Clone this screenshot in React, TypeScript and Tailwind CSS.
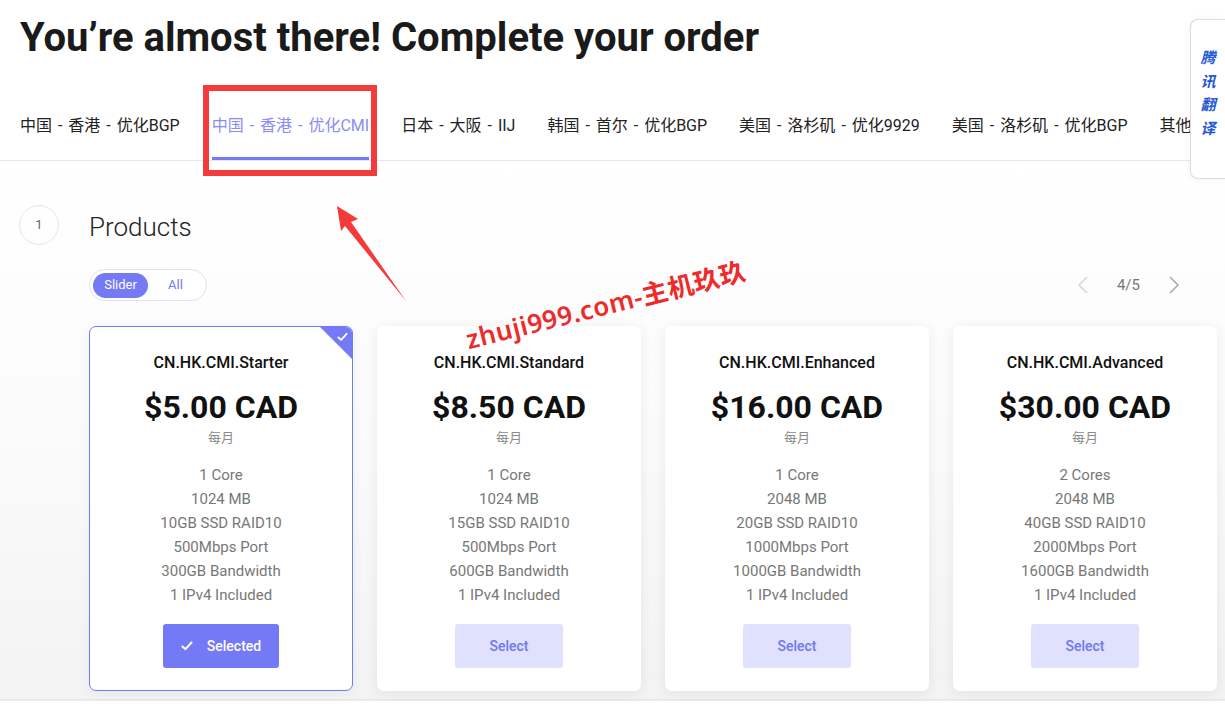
import React from "react";

const FONT = { fontFamily: 'Roboto, "Noto Sans CJK SC", sans-serif' } as React.CSSProperties;

const tabs = [
  "中国 - 香港 - 优化BGP",
  "中国 - 香港 - 优化CMI",
  "日本 - 大阪 - IIJ",
  "韩国 - 首尔 - 优化BGP",
  "美国 - 洛杉矶 - 优化9929",
  "美国 - 洛杉矶 - 优化BGP",
  "其他",
];

const products = [
  {
    name: "CN.HK.CMI.Starter",
    price: "$5.00 CAD",
    features: ["1 Core", "1024 MB", "10GB SSD RAID10", "500Mbps Port", "300GB Bandwidth", "1 IPv4 Included"],
    selected: true,
  },
  {
    name: "CN.HK.CMI.Standard",
    price: "$8.50 CAD",
    features: ["1 Core", "1024 MB", "15GB SSD RAID10", "500Mbps Port", "600GB Bandwidth", "1 IPv4 Included"],
  },
  {
    name: "CN.HK.CMI.Enhanced",
    price: "$16.00 CAD",
    features: ["1 Core", "2048 MB", "20GB SSD RAID10", "1000Mbps Port", "1000GB Bandwidth", "1 IPv4 Included"],
  },
  {
    name: "CN.HK.CMI.Advanced",
    price: "$30.00 CAD",
    features: ["2 Cores", "2048 MB", "40GB SSD RAID10", "2000Mbps Port", "1600GB Bandwidth", "1 IPv4 Included"],
  },
];

function Check({ className }: { className?: string }) {
  return (
    <svg viewBox="0 0 12 10" className={className} fill="none" stroke="currentColor" strokeWidth="2" strokeLinecap="round" strokeLinejoin="round">
      <polyline points="1.5,5.5 4.5,8.2 10.5,1.5" />
    </svg>
  );
}

function Card({ p }: { p: (typeof products)[number] }) {
  return (
    <div
      className={
        "relative w-[264px] h-[365px] shrink-0 rounded-[7px] bg-white overflow-hidden flex flex-col items-center pt-[26px] " +
        (p.selected
          ? "border border-[#7479f5] shadow-[0_2px_12px_rgba(0,0,0,0.05)]"
          : "border border-transparent shadow-[0_2px_14px_rgba(0,0,0,0.07)]")
      }
    >
      {p.selected && (
        <div className="absolute top-0 right-0 w-[32px] h-[32px]">
          <div className="absolute inset-0 bg-[#7479f5] [clip-path:polygon(0_0,100%_0,100%_100%)]" />
          <Check className="absolute top-[5px] right-[4px] w-[11px] h-[10px] text-white" />
        </div>
      )}
      <div className="text-[16px] leading-5 font-medium text-[#111]">{p.name}</div>
      <div className="mt-[14px] text-[32px] leading-[40px] font-bold text-[#111]">{p.price}</div>
      <div className="mt-[2px] text-[13px] leading-[18px] text-[#8a8a8a]">每月</div>
      <div className="mt-[16px] flex flex-col items-center">
        {p.features.map((f) => (
          <div key={f} className="text-[15px] leading-6 text-[#777]">
            {f}
          </div>
        ))}
      </div>
      {p.selected ? (
        <div className="mt-[17px] w-[116px] h-[44px] rounded-[3px] bg-[#7479f5] flex items-center justify-center gap-[14px] text-white text-[14px] font-medium">
          <Check className="w-[12px] h-[10px]" />
          <span>Selected</span>
        </div>
      ) : (
        <div className="mt-[17px] w-[108px] h-[44px] rounded-[3px] bg-[#e0e1fc] flex items-center justify-center text-[#7177ee] text-[14px] font-medium">
          Select
        </div>
      )}
    </div>
  );
}

export default function App() {
  return (
    <div className="relative w-[1225px] h-[708px] overflow-hidden bg-white" style={FONT}>
      {/* Header */}
      <div className="pt-[14px] pl-[20px]">
        <h1 className="text-[40px] leading-[48px] font-bold text-[#1a1a1a]">
          You’re almost there! Complete your order
        </h1>
      </div>
      <div className="mt-[52px] border-b border-[#e8e8e8] pl-[20px] flex gap-8 whitespace-nowrap">
        {tabs.map((t, i) => (
          <div
            key={t}
            className={
              "text-[16px] leading-6 pb-[19px] border-b-[3px] [word-spacing:2px] " +
              (i === 1 ? "text-[#8a8cf6] border-[#7479f5]" : "text-[#222] border-transparent")
            }
          >
            {t}
          </div>
        ))}
      </div>

      {/* Section */}
      <div className="h-[540px] bg-gradient-to-b from-white via-[#fbfbfb] to-[#f3f3f3] border-b-2 border-[#e9e9e9] flex">
        <div className="pl-[19px] pt-[44px] w-[89px] shrink-0">
          <div className="w-[40px] h-[40px] rounded-full border border-[#e6e6e6] flex items-center justify-center text-[13px] text-[#666]">
            1
          </div>
        </div>
        <div className="flex-1 pt-[50px]">
          <div className="text-[26px] leading-8 font-light text-[#222]">Products</div>
          <div className="mt-[26px] flex items-center justify-between pr-[46px]">
            <div className="flex items-center h-[32px] rounded-full border border-[#e2e3ea] p-[3px] bg-white">
              <div className="w-[55px] h-[25px] rounded-full bg-[#7479f5] text-white text-[13px] flex items-center justify-center">
                Slider
              </div>
              <div className="w-[55px] h-[25px] rounded-full text-[#7479f5] text-[13px] flex items-center justify-center">
                All
              </div>
            </div>
            <div className="flex items-center gap-[26px] text-[15px] text-[#777]">
              <svg viewBox="0 0 10 18" className="w-[10px] h-[18px]" fill="none" stroke="#d6d6d6" strokeWidth="1.5">
                <polyline points="9,1 1,9 9,17" />
              </svg>
              <span className="mx-[3px]">4/5</span>
              <svg viewBox="0 0 10 18" className="w-[10px] h-[18px]" fill="none" stroke="#a6a6a6" strokeWidth="1.5">
                <polyline points="1,1 9,9 1,17" />
              </svg>
            </div>
          </div>
          <div className="mt-[25px] flex gap-[24px]">
            {products.map((p) => (
              <Card key={p.name} p={p} />
            ))}
          </div>
        </div>
      </div>

      {/* Translate widget */}
      <div className="absolute top-[19px] right-0 w-[35px] h-[160px] bg-white border border-r-0 border-[#dcdcdc] rounded-l-[8px] shadow-[0_0_6px_rgba(0,0,0,0.06)] flex flex-col items-center pt-[27px]">
        {"腾讯翻译".split("").map((c) => (
          <div key={c} className="text-[15px] leading-[23.5px] font-bold italic text-[#2456d6]">
            {c}
          </div>
        ))}
      </div>

      {/* Annotation: red box */}
      <div className="absolute left-[203px] top-[85px] w-[174px] h-[91px] border-[6px] border-[#f43a3a] pointer-events-none" />

      {/* Annotation: red arrow */}
      <svg className="absolute left-0 top-0 pointer-events-none" width="1225" height="708">
        <polygon points="337,206 358,219 351,222 406,301 345,226 341,231" fill="#f43a3a" />
      </svg>

      {/* Watermark */}
      <div
        className="absolute left-[470px] top-[324px] origin-bottom-left -rotate-[14deg] text-[26px] leading-[30px] font-semibold text-[#ee2a2a] whitespace-nowrap tracking-[0.5px]"
        style={{ fontFamily: '"Noto Sans", "Noto Sans CJK SC", sans-serif' }}
      >
        zhuji999.com-主机玖玖
      </div>
    </div>
  );
}
